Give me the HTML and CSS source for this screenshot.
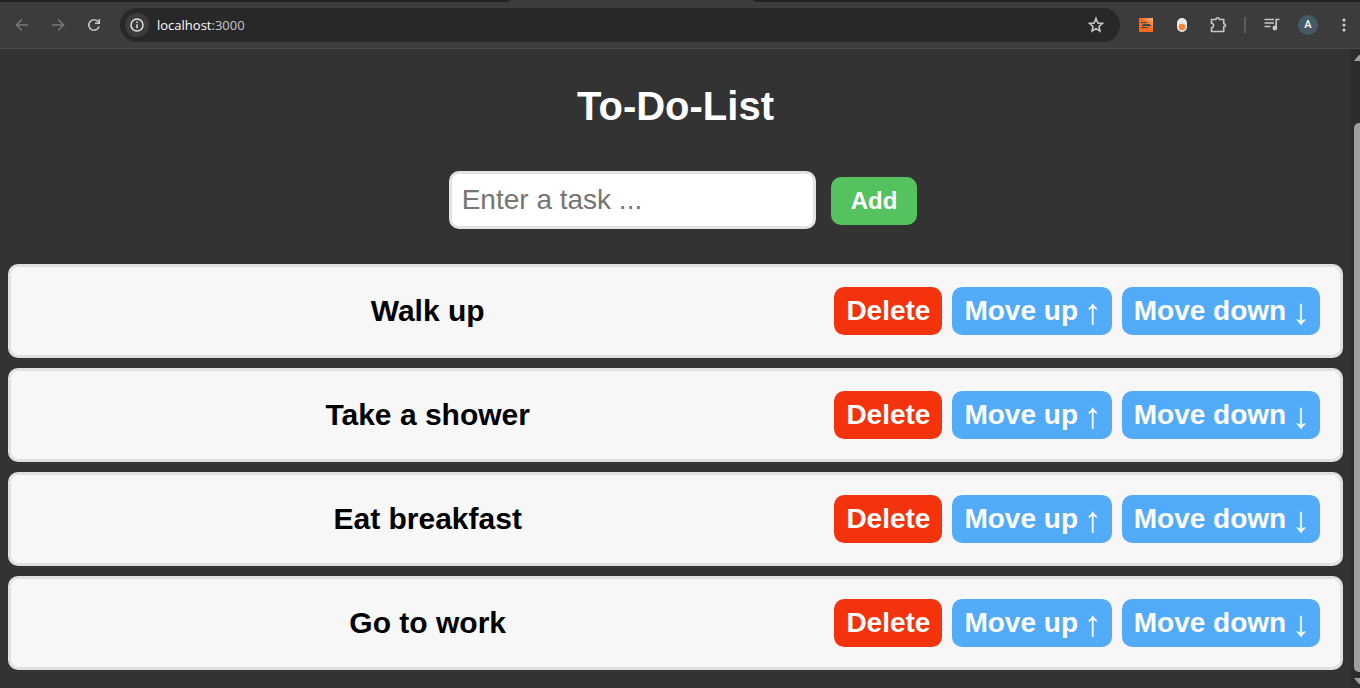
FILE: index.html
```html
<!DOCTYPE html>
<html lang="en">
<head>
<meta charset="utf-8">
<title>To-Do-List</title>
<link rel="stylesheet" href="styles.css">
</head>
<body>
<header class="browser">
  <div class="tabs"><span class="tab-left"></span><span class="tab-right"></span></div>
  <div class="toolbar">
    <nav class="nav" aria-label="Browser">
      <button class="icon-btn dim" aria-label="Back"><svg width="16" height="16" viewBox="0 0 16 16"><path d="M14 8H3M8 2.500L2.500 8L8 13.500"/></svg></button>
      <button class="icon-btn dim" aria-label="Forward"><svg width="16" height="16" viewBox="0 0 16 16"><path d="M2 8H13M8 2.500L13.500 8L8 13.500"/></svg></button>
      <button class="icon-btn" aria-label="Reload"><svg width="16" height="16" viewBox="0 0 16 16"><path d="M13 9.500A5.200 5.200 0 1 1 11.900 4.500L13 5.700"/><path d="M13.300 2V6.300H9"/></svg></button>
    </nav>
    <div class="address">
      <button class="site-info" aria-label="Site information"><svg width="16" height="16" viewBox="0 0 16 16"><circle cx="8" cy="8" r="6"/><path d="M8 7.200V11.200M8 4.500V6"/></svg></button>
      <span class="url">localhost<span class="port">:3000</span></span>
      <button class="icon-btn star" aria-label="Bookmark"><svg width="18" height="18" viewBox="0 0 18 18"><path d="M9 2.500L10.800 7L15.500 7.400L12 10.500L13 15L9 12.600L5 15L6 10.500L2.500 7.400L7.200 7Z"/></svg></button>
    </div>
    <div class="extensions">
      <button class="icon-btn" aria-label="Reader extension"><svg class="solid" width="14" height="14" viewBox="0 0 14 14"><defs><linearGradient id="warm" x1="0" y1="1" x2="1" y2="0"><stop offset=".55" stop-color="#f66a1c"/><stop offset="1" stop-color="#ffb98f"/></linearGradient></defs><path fill="url(#warm)" d="M0 0H14V14H0Z"/><path fill="#35475a" d="M2 4H8V5H2ZM4 6H11V7H12V8H3V7H4ZM2 9H9V10H2Z"/></svg></button>
      <button class="icon-btn" aria-label="Switch extension"><svg class="solid" width="14" height="16" viewBox="0 0 14 16"><rect x="2" y="1" width="10" height="14" rx="5" fill="#e9e9e9"/><circle cx="7" cy="10" r="3.300" fill="#fa8335"/></svg></button>
      <button class="icon-btn" aria-label="Extensions"><svg width="18" height="18" viewBox="0 0 18 18"><path d="M2.500 3.500H7Q7 1.800 8.700 1.800T10.400 3.500H14.700V7.600Q16.500 7.800 16.500 9.200T14.700 10.900V15.500H2.500V12Q4.600 11.500 4.600 9.500T2.500 7.200Z"/></svg></button>
      <span class="divider"></span>
      <button class="icon-btn" aria-label="Media controls"><svg width="18" height="18" viewBox="0 0 18 18"><path d="M1.500 3.500H11M1.500 7H11M1.500 10.500H7.500M13.200 12V3.500H16.500"/><circle class="note" cx="11.900" cy="12" r="1.600"/></svg></button>
      <button class="avatar" aria-label="Profile">A</button>
      <button class="icon-btn" aria-label="Menu"><svg class="solid" width="18" height="18" viewBox="0 0 18 18"><circle cx="9" cy="4" r="1.600" fill="#d0d0d0"/><circle cx="9" cy="9" r="1.600" fill="#d0d0d0"/><circle cx="9" cy="14" r="1.600" fill="#d0d0d0"/></svg></button>
    </div>
  </div>
</header>
<div class="viewport">
  <main class="page">
    <h1 class="title">To-Do-List</h1>
    <form class="task-form">
      <input class="task-input" type="text" placeholder="Enter a task ..." aria-label="Task">
      <button class="add" type="button">Add</button>
    </form>
    <ol class="tasks">
      <li class="task"><span class="text">Walk up</span><button class="action delete">Delete</button><button class="action move">Move up <span class="arrow">↑</span></button><button class="action move">Move down <span class="arrow">↓</span></button></li>
      <li class="task"><span class="text">Take a shower</span><button class="action delete">Delete</button><button class="action move">Move up <span class="arrow">↑</span></button><button class="action move">Move down <span class="arrow">↓</span></button></li>
      <li class="task"><span class="text">Eat breakfast</span><button class="action delete">Delete</button><button class="action move">Move up <span class="arrow">↑</span></button><button class="action move">Move down <span class="arrow">↓</span></button></li>
      <li class="task"><span class="text">Go to work</span><button class="action delete">Delete</button><button class="action move">Move up <span class="arrow">↑</span></button><button class="action move">Move down <span class="arrow">↓</span></button></li>
    </ol>
  </main>
  <div class="scrollbar" aria-hidden="true">
    <svg width="6" height="6" viewBox="0 0 6 6"><path d="M0 6L5 0H6V6Z" fill="#9f9f9f"/></svg>
    <span class="thumb"></span>
    <svg width="6" height="6" viewBox="0 0 6 6"><path d="M0 0H6V6H5Z" fill="#9f9f9f"/></svg>
  </div>
</div>
</body>
</html>
```
FILE: styles.css
```css
* {
  box-sizing: border-box;
}

body {
  margin: 0;
  min-height: 100vh;
  display: flex;
  flex-direction: column;
  background: #333333;
  font-family: "Liberation Sans", Arial, sans-serif;
}

button {
  border: 0;
  padding: 0;
  background: none;
  color: inherit;
  font-family: inherit;
  cursor: pointer;
}

svg {
  display: block;
  fill: none;
  stroke: #c7c7c7;
  stroke-width: 1.6;
}

.solid,
.scrollbar svg {
  stroke: none;
}

/* Browser bar */
.browser {
  background: #3c3c3c;
  border-bottom: 1px solid #4a4a4a;
}

.tabs {
  display: flex;
  justify-content: space-between;
  height: 2px;
}

.tab-left,
.tab-right {
  background: #202120;
}

.tab-left {
  width: 510px;
  border-bottom-right-radius: 6px 2px;
}

.tab-right {
  width: 607px;
  border-bottom-left-radius: 6px 2px;
}

.toolbar {
  display: flex;
  align-items: center;
  height: 46px;
}

.nav {
  display: flex;
  gap: 12px;
  padding: 0 14px 0 10px;
}

.icon-btn {
  display: grid;
  place-items: center;
  width: 24px;
  height: 24px;
}

.dim svg {
  stroke: #777777;
}

.address {
  flex: 1;
  display: flex;
  align-items: center;
  height: 34px;
  padding: 0 12px 0 5px;
  border-radius: 17px;
  background: #282828;
}

.site-info {
  display: grid;
  place-items: center;
  width: 24px;
  height: 24px;
  border-radius: 50%;
  background: #3c3c3c;
}

.site-info svg {
  stroke: #e3e3e3;
  stroke-width: 1.5;
}

.url {
  flex: 1;
  margin-left: 8px;
  color: #ffffff;
  font: 13px/18px "Open Sans", sans-serif;
}

.port {
  color: #c7c7c7;
}

.extensions {
  display: flex;
  align-items: center;
  gap: 12px;
  padding: 0 4px 0 14px;
}

.divider {
  width: 2px;
  height: 16px;
  margin: 0 2px;
  background: #5d5d5d;
}

.note {
  fill: #c7c7c7;
}

.avatar {
  width: 20px;
  height: 20px;
  margin: 0 2px;
  border-radius: 50%;
  background: #455a64;
  color: #ffffff;
  font: 500 11px/20px Roboto, sans-serif;
}

/* Page */
.viewport {
  flex: 1;
  display: flex;
}

.page {
  flex: 1;
  padding: 34px 8px 18px;
}

.title {
  margin: 0 0 42px;
  color: #ffffff;
  font-size: 40px;
  line-height: 46px;
  text-align: center;
}

.task-form {
  display: flex;
  justify-content: center;
  align-items: baseline;
  gap: 15px;
  padding-left: 15px;
}

.task-input {
  width: 367px;
  height: 58px;
  padding: 10px;
  border: 3px solid #e3e3e3;
  border-radius: 10px;
  background: #ffffff;
  font-family: inherit;
  font-size: 28px;
}

.task-input::placeholder {
  color: #757575;
}

.add {
  height: 48px;
  padding: 0 20px;
  border-radius: 10px;
  background: #54c25e;
  color: #ffffff;
  font-size: 24px;
  font-weight: bold;
}

.tasks {
  display: flex;
  flex-direction: column;
  gap: 10px;
  margin: 35px 0 0;
  padding: 0;
  list-style: none;
}

.task {
  display: flex;
  align-items: center;
  gap: 10px;
  padding: 20px;
  border: 3px solid #e0e0e0;
  border-radius: 10px;
  background: #f7f7f7;
}

.text {
  flex: 1;
  color: #000000;
  font-size: 30px;
  font-weight: bold;
  text-align: center;
}

.action {
  height: 48px;
  padding: 0 12px;
  border-radius: 10px;
  color: #ffffff;
  font-size: 28px;
  font-weight: bold;
  white-space: nowrap;
}

.delete {
  background: #f4330d;
}

.move {
  background: #52abf8;
}

.arrow {
  margin: 0 -2px;
  font-size: 36px;
  font-weight: normal;
  line-height: 0;
  vertical-align: -4px;
}

.scrollbar {
  display: flex;
  flex-direction: column;
  align-items: flex-end;
  width: 9px;
  padding: 6px 0 4px;
  background: #2c2c2c;
}

.thumb {
  flex: 1;
  width: 6px;
  margin: 62px 0 6px;
  border-radius: 5px 0 0 5px;
  background: #9f9f9f;
}
```
